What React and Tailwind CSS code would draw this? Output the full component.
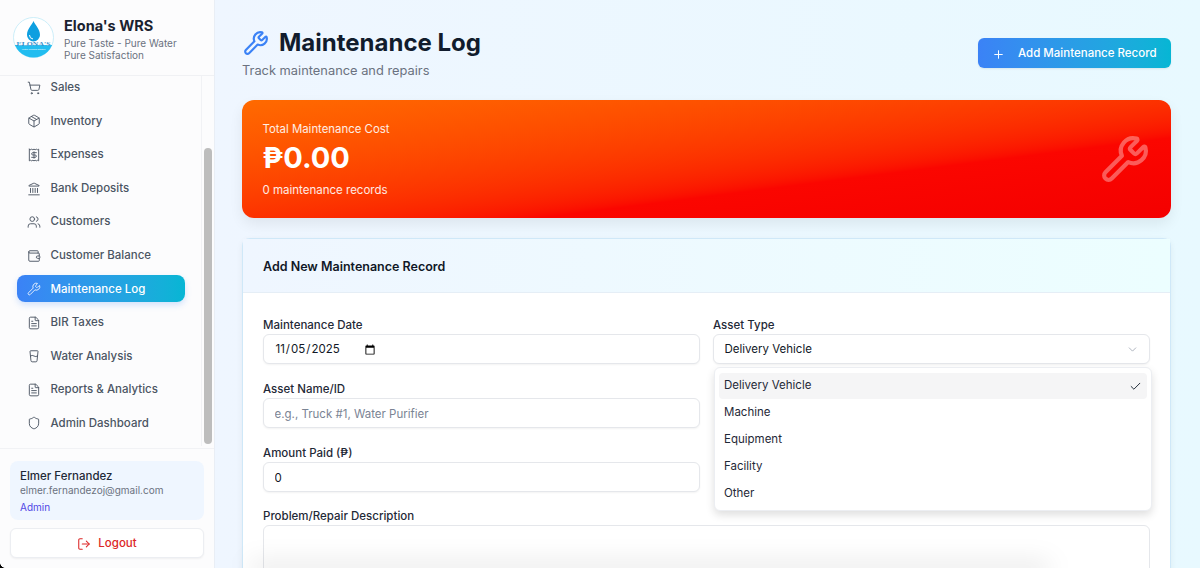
import React from "react";
import { ShoppingCart, Package, Receipt, Landmark, Users, Wallet, Wrench, FileText, GlassWater, Shield, LogOut, Plus, Check, ChevronDown } from "lucide-react";

const nav = [
  ["Sales", ShoppingCart],
  ["Inventory", Package],
  ["Expenses", Receipt],
  ["Bank Deposits", Landmark],
  ["Customers", Users],
  ["Customer Balance", Wallet],
  ["Maintenance Log", Wrench, true],
  ["BIR Taxes", FileText],
  ["Water Analysis", GlassWater],
  ["Reports & Analytics", FileText],
  ["Admin Dashboard", Shield],
];

function Logo() {
  return (
    <svg width="41" height="41" viewBox="0 0 41 41" className="shrink-0">
      <defs>
        <clipPath id="logoClip"><circle cx="20.5" cy="20.5" r="20" /></clipPath>
      </defs>
      <circle cx="20.5" cy="20.5" r="20" fill="#ffffff" stroke="#bfeaf7" strokeWidth="0.8" />
      <g clipPath="url(#logoClip)">
        <rect x="0" y="28" width="41" height="15" fill="#22bdf0" />
      </g>
      <path d="M20.5 4 C22 8 27 12 27 18 A6.5 6.5 0 0 1 14 18 C14 12 19 8 20.5 4 Z" fill="#0e9fe0" />
      <path d="M16.5 18 A4 4 0 0 0 20 22" stroke="#ffffff" strokeWidth="1" fill="none" />
      <text x="20.5" y="29" textAnchor="middle" textLength="34" lengthAdjust="spacingAndGlyphs" fontFamily="Liberation Serif, serif" fontWeight="700" fontSize="6.6" fill="#0b7cc4" stroke="#ffffff" strokeWidth="0.12">ELONA'S</text>
      <text x="20.5" y="33" textAnchor="middle" fontFamily="Liberation Sans, sans-serif" fontSize="2.4" fill="#ffffff">Water Refilling Station</text>
    </svg>
  );
}

function Label({ children }) {
  return <label className="block text-[11.5px] leading-[14px] font-medium text-[#1f2937] mb-[2px]">{children}</label>;
}

const inputCls = "block w-full h-[30px] rounded-md border border-[#e5e7eb] bg-white px-[10.5px] pt-px text-[11.5px] text-[#111827] shadow-[0_1px_2px_rgba(0,0,0,0.05)] outline-none placeholder:text-[#7b8494]";

export default function App() {
  return (
    <div className="relative flex h-[568px] w-[1200px] overflow-hidden bg-white text-[#111827]" style={{ fontFamily: "Inter, 'Noto Sans', sans-serif" }}>
      <aside className="flex h-full w-[215px] shrink-0 flex-col border-r border-[#e9eef5] bg-[#fcfcfd]">
        <div className="flex h-[76px] shrink-0 items-center gap-[10px] border-b border-[#f0f1f4] pl-[13px]">
          <Logo />
          <div className="pt-[2px]">
            <div className="mb-[2px] text-[14.5px] leading-[19px] font-bold text-[#1a2230]">Elona's WRS</div>
            <div className="text-[10px] leading-[12.5px] text-[#6b7280]">Pure Taste - Pure Water</div>
            <div className="text-[10px] leading-[12.5px] text-[#6b7280]">Pure Satisfaction</div>
          </div>
        </div>
        <div className="relative min-h-0 flex-1 overflow-hidden">
          <nav className="mr-[12px] h-full border-r border-[#f1f2f5] pl-[17px] pr-[16px]">
            <ul className="-mt-[2.1px] flex flex-col gap-[6.55px]">
              {nav.map(([name, Icon, active]) => (
                <li
                  key={name}
                  className={
                    active
                      ? "flex h-[27px] items-center gap-[9.5px] rounded-lg bg-gradient-to-r from-[#3b82f6] to-[#06b6d4] pl-[10px] pt-px text-[11.5px] font-medium text-white shadow-[0_3px_6px_rgba(59,130,246,0.22)]"
                      : "flex h-[27px] items-center gap-[9.5px] pl-[10px] pt-px text-[11.5px] font-medium text-[#4b5563]"
                  }
                >
                  <Icon size={14} strokeWidth={1.6} className={active ? "text-white/90" : "text-[#4b5563]"} />
                  <span>{name}</span>
                </li>
              ))}
            </ul>
          </nav>
          <div className="absolute left-[204px] top-[72px] h-[296px] w-[8px] rounded-full bg-[#bdbdbd]" />
        </div>
        <div className="shrink-0 border-t border-[#f1f2f5] px-[10px] pt-[12px] pb-[10px]">
          <div className="h-[59px] rounded-lg bg-[#eff6ff] px-[10px] pt-[8px]">
            <div className="text-[11.5px] leading-[14px] font-medium text-[#1f2937]">Elmer Fernandez</div>
            <div className="text-[10px] leading-[14px] text-[#6b7280]">elmer.fernandezoj@gmail.com</div>
            <div className="mt-[3px] text-[10px] leading-[14px] text-[#4f46e5]">Admin</div>
          </div>
          <div className="mt-[8px] flex h-[30px] items-center justify-center gap-[7px] rounded-md border border-[#eceef2] bg-white pt-px text-[11.5px] font-medium text-[#dc2626] shadow-[0_1px_2px_rgba(0,0,0,0.05)]">
            <LogOut size={14} strokeWidth={1.8} />
            <span>Logout</span>
          </div>
        </div>
      </aside>

      <main className="min-w-0 flex-1 overflow-hidden bg-gradient-to-r from-[#eff6ff] to-[#e8f9ff] pl-[27px] pr-[29px]">
        <div className="flex h-[100px] items-start justify-between">
          <div className="pt-[27px]">
            <div className="flex items-center gap-[10px] pl-[1px]">
              <Wrench size={26} strokeWidth={2} className="text-[#3b82f6]" />
              <h1 className="text-[24px] leading-[32px] font-bold text-[#111c2d]">Maintenance Log</h1>
            </div>
            <p className="mt-[3px] text-[12.85px] leading-[18px] text-[#6b7280]">Track maintenance and repairs</p>
          </div>
          <div className="mt-[38px] flex h-[30px] w-[193px] items-center rounded-md bg-gradient-to-r from-[#3b82f6] to-[#06b6d4] pl-[14px] pt-[2px] text-[11.5px] font-medium text-white shadow-[0_1px_2px_rgba(0,0,0,0.08)]">
            <Plus size={13} strokeWidth={1.8} />
            <span className="ml-[13px]">Add Maintenance Record</span>
          </div>
        </div>

        <section className="relative flex h-[118px] flex-col rounded-xl bg-gradient-to-br from-[#ff6a00] via-[#fb0600] via-66% to-[#f40000] pl-[20.5px] pt-[23px] text-white shadow-[0_6px_14px_rgba(0,0,0,0.07)]">
          <div className="text-[11.4px] leading-[13px] text-white/90">Total Maintenance Cost</div>
          <div className="mt-[4px] text-[29px] leading-[36px] font-bold">₱0.00</div>
          <div className="mt-[7px] text-[11.5px] leading-[14px] text-white/90">0 maintenance records</div>
          <Wrench size={50} strokeWidth={2} className="absolute right-[21px] top-[34px] text-white/35" />
        </section>

        <section className="mt-[20px] rounded-t-lg border-t border-l border-r border-[#cfe8f8] bg-white shadow-[0_2px_6px_rgba(0,0,0,0.06)]">
          <div className="flex h-[54px] items-center border-b border-[#e5eef6] bg-gradient-to-r from-[#eff6ff] to-[#ecfeff] px-[20px] pt-[3px]">
            <h2 className="text-[12.5px] font-semibold text-[#111827]">Add New Maintenance Record</h2>
          </div>
          <div className="relative grid grid-cols-2 gap-x-[13px] px-[20px] pt-[25px]">
            <div className="flex flex-col gap-[18px]">
              <div>
                <Label>Maintenance Date</Label>
                <div className={inputCls + " flex items-center"}>
                  <input type="date" defaultValue="2025-11-05" className="w-[103px] border-0 bg-transparent p-0 text-[11.5px] text-[#111827] outline-none" />
                </div>
              </div>
              <div>
                <Label>Asset Name/ID</Label>
                <input readOnly placeholder="e.g., Truck #1, Water Purifier" className={inputCls} />
              </div>
              <div>
                <Label>Amount Paid (₱)</Label>
                <input readOnly defaultValue="0" className={inputCls} />
              </div>
            </div>
            <div>
              <Label>Asset Type</Label>
              <div className={inputCls + " flex items-center justify-between"}>
                <span>Delivery Vehicle</span>
                <ChevronDown size={13} strokeWidth={1.5} className="text-[#9ca3af]" />
              </div>
            </div>
            <div className="col-span-2 mt-[17px]">
              <Label>Problem/Repair Description</Label>
              <div className="h-[80px] rounded-md border border-[#e5e7eb] bg-white" />
            </div>
            <div className="absolute left-[471px] top-[74px] w-[438px] rounded-md border border-[#eceef2] bg-white px-[4px] pt-[5px] pb-[3px] text-[11.5px] text-[#1f2937] shadow-[0_4px_8px_rgba(0,0,0,0.13)]">
              <div className="flex h-[26px] items-center justify-between rounded-sm bg-[#f5f5f6] pl-[5px] pr-[1px]">
                <span>Delivery Vehicle</span>
                <Check size={13} strokeWidth={1.8} className="mr-[4px]" />
              </div>
              {["Machine", "Equipment", "Facility", "Other"].map((o) => (
                <div key={o} className="mt-[1px] flex h-[26px] items-center pl-[5px]">{o}</div>
              ))}
            </div>
          </div>
        </section>
      </main>
      <div className="pointer-events-none absolute -bottom-[8px] left-[250px] h-[14px] w-[800px] rounded-full bg-black/10 blur-md" />
      <div className="pointer-events-none absolute bottom-0 left-0 h-[5px] w-[5px] bg-[radial-gradient(circle_at_100%_0,transparent_4.5px,black_5px)]" />
    </div>
  );
}
